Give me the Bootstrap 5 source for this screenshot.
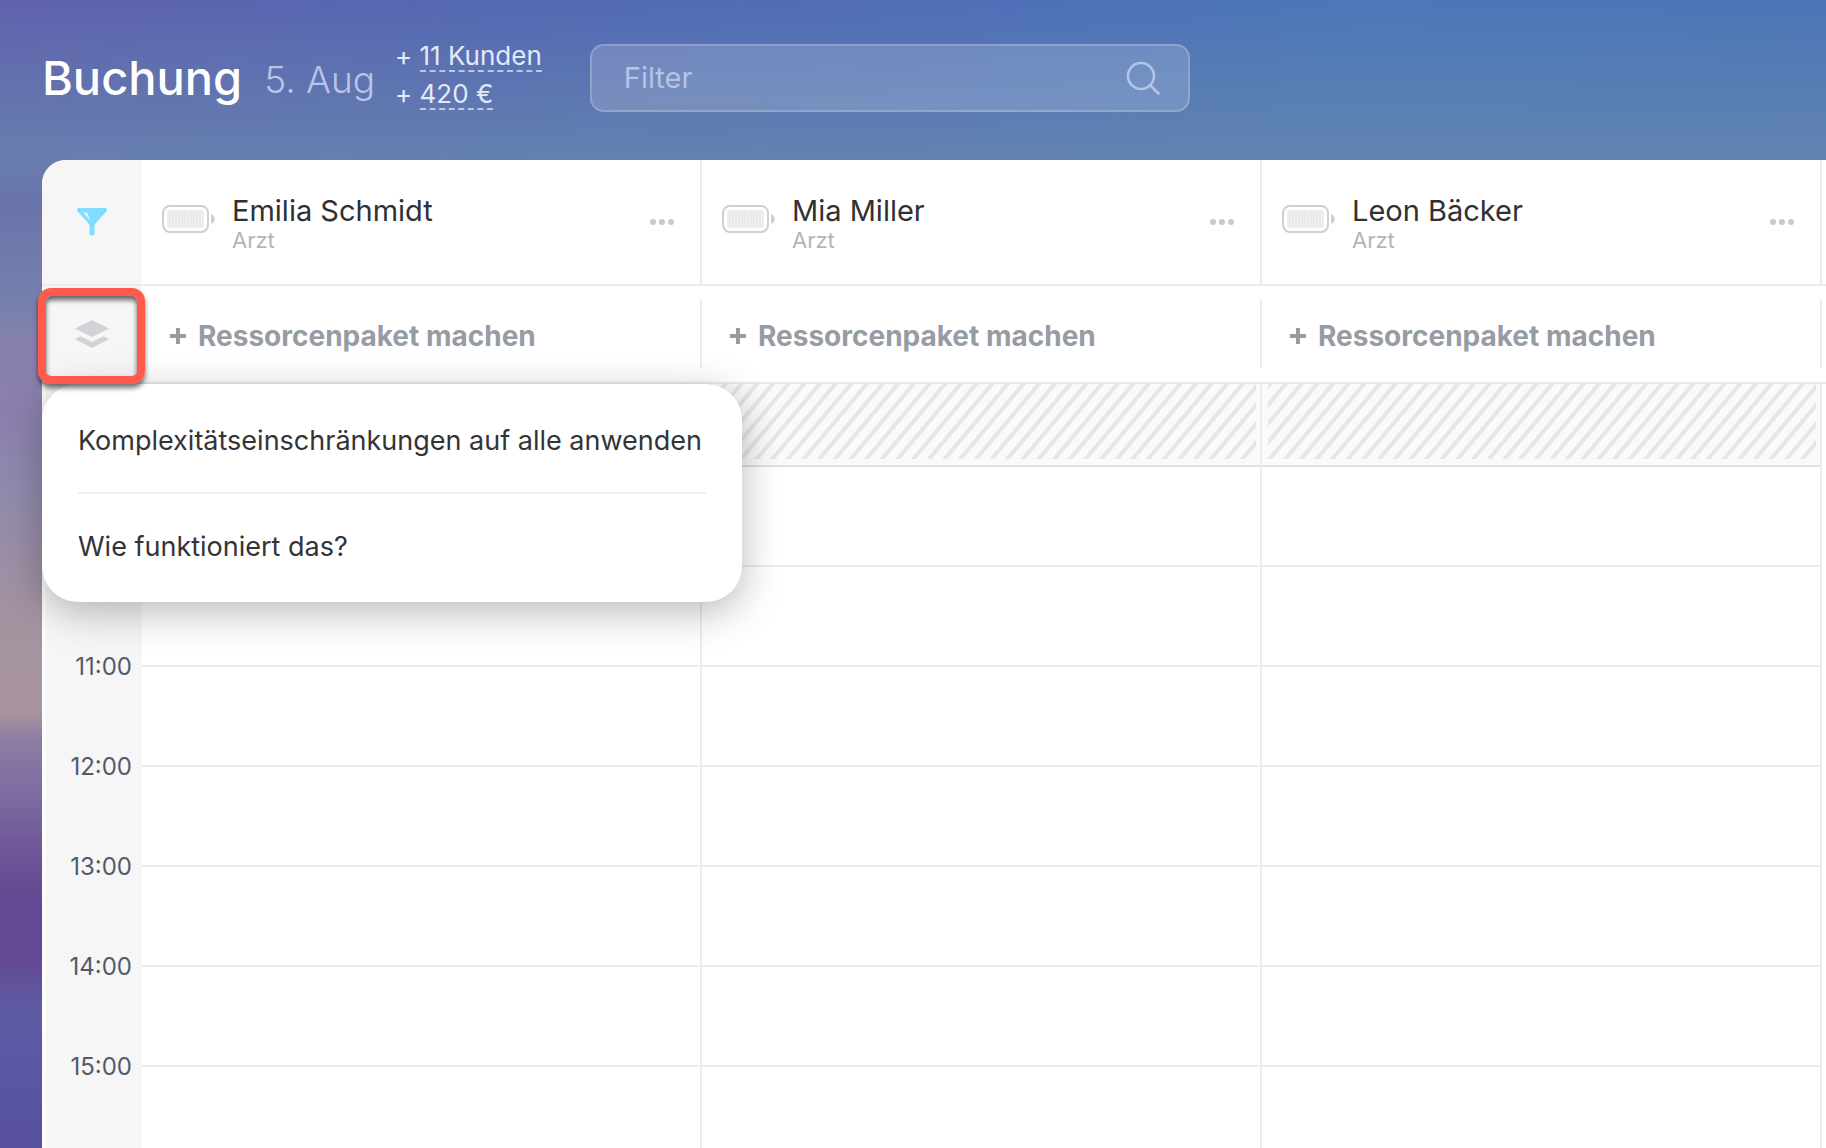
<!DOCTYPE html>
<html lang="de">
<head>
<meta charset="utf-8">
<meta name="viewport" content="width=device-width, initial-scale=1">
<title>Buchung</title>
<link rel="stylesheet" href="https://cdn.jsdelivr.net/npm/bootstrap@5.3.0/dist/css/bootstrap.min.css">
<style>
  body {
    font-family: Inter, "Liberation Sans", sans-serif;
    color: #2f3133;
    background: #5b58a5;
    min-height: 100vh;
    overflow: hidden;
  }
  .page {
    height: 100vh;
    background:
      linear-gradient(to bottom, transparent 150px, #6973aa 200px, #7580ad 300px, #8780ae 345px, #8c7fae 410px, #8f8aae 480px, #9d8fa6 560px, #a5949f 640px, #a9949f 712px, #8d7ca3 740px, #7b6aa0 800px, #6f5699 850px, #644893 900px, #644893 960px, #5f5aa3 1005px, #5a57a5 1070px, #57509c 1148px) 0 0 / 60px 100% no-repeat,
      linear-gradient(to bottom, transparent, rgba(108, 140, 174, .75) 180px) 0 0 / 100% 200px no-repeat,
      linear-gradient(97deg, #6062ad 0, #5468b3 25%, #4f6fb8 50%, #4b77b8 70%, #4b74b6 100%);
  }
  .topbar { height: 160px; padding: 0 42px 4px; }
  .topbar h1 { font-size: 47px; line-height: 60px; font-weight: 500; color: #fff; }
  .day { font-size: 37px; line-height: 60px; font-weight: 300; color: #b9c4ea; margin-left: 22px; padding-top: 4px; }
  .stats { font-size: 26px; line-height: 38px; color: #e3e9f8; margin-left: 20px; padding-bottom: 6px; }
  .stats a { color: inherit; text-decoration: none; display: inline-block; line-height: 28px; border-bottom: 2px dashed rgba(255, 255, 255, .6); }
  .search { width: 600px; height: 68px; border: 2px solid rgba(255, 255, 255, .2); border-radius: 14px; background: rgba(255, 255, 255, .16); padding: 0 28px 0 32px; }
  .search input, .search input:focus { background: none; color: #fff; font-size: 29px; line-height: 36px; box-shadow: none; }
  .search input::placeholder { color: #b3c4e6; opacity: 1; }
  .panel { margin-left: 42px; background: #fff; border-top-left-radius: 24px; min-height: 0; }
  .rail { width: 100px; background: #f6f6f6; }
  .staff-row, .package-row, .hours { padding-right: 4px; }
  .staff-row { height: 126px; border-bottom: 2px solid #ececec; }
  .staff-row .rail { border-top-left-radius: 24px; }
  .package-row { height: 98px; border-bottom: 2px solid #e9e9e9; }
  .lane { flex: 1 0 0; min-width: 460px; border-right: 2px solid #ececee; }
  .package-row .lane { margin: 14px 0; padding: 4px 0 0 28px; }
  .staff { padding: 0 26px 0 20px; }
  .staff h2 { font-size: 29px; line-height: 34px; font-weight: 400; }
  .staff-name { padding-top: 4px; }
  .batt { margin-bottom: 6px; }
  .role { font-size: 22px; line-height: 24px; color: #b1b4b9; padding-bottom: 2px; }
  .plain { border: 0; background: none; padding: 0; line-height: 0; }
  .add { font-size: 28px; line-height: 34px; font-weight: 700; color: #969ca3; gap: 12px; }
  .slot { height: 100px; border-bottom: 2px solid #ececee; }
  .closed { height: 83px; border-bottom-color: #dfe0e2; background: #fafafa; padding: 0 4px 6px 6px; }
  .hatch { background: repeating-linear-gradient(130deg, #e5e6e8 0 3px, #f9fafc 4px 11px, #e5e6e8 12px); }
  .hours .rail { padding-top: 268px; border-left: 4px solid #fcfcfd; }
  .time { height: 100px; font-size: 24px; line-height: 30px; color: #525b69; padding-right: 10px; }
  .marker { left: -4px; top: 2px; width: 107px; height: 96px; border: 8px solid #ff5a4b; border-radius: 13px; z-index: 5; box-shadow: 0 4px 5px rgba(0, 0, 0, .55), inset 0 4px 5px rgba(0, 0, 0, .6); }
  .popup { left: 0; top: 98px; width: 700px; height: 218px; border-radius: 36px; background: #fff; padding: 0 36px; z-index: 3; box-shadow: 0 10px 40px rgba(0, 0, 0, .28); }
  .popup a { color: #333436; text-decoration: none; font-size: 27px; line-height: 36px; padding: 39px 0 33px; }
  .popup a + a { border-top: 2px solid #f0f0f0; padding-top: 35px; }
</style>
</head>
<body>
<svg width="0" height="0" class="position-absolute"><defs>
  <g id="battery"><rect x="1" y="1" width="45" height="26" rx="7" fill="#fff" stroke="#cfd0d3" stroke-width="2"/><rect x="5" y="5" width="37" height="18" rx="2" fill="#f1f1f3"/><path d="M7 14h34" stroke="#e9eaec" stroke-width="18" stroke-dasharray="2 1"/><path d="M49 9c5 1 5 9 0 10z" fill="#cfd0d3"/></g>
  <g id="dots" fill="#c6c8cb"><circle cx="3" cy="3" r="3"/><circle cx="12" cy="3" r="3"/><circle cx="21" cy="3" r="3"/></g>
</defs></svg>
<div class="page d-flex flex-column">
  <header class="topbar flex-shrink-0 d-flex align-items-center">
    <h1 class="m-0">Buchung</h1>
    <div class="day">5. Aug</div>
    <div class="stats">
      <div>+ <a href="#">11 Kunden</a></div>
      <div>+ <a href="#">420 €</a></div>
    </div>
    <form class="search d-flex align-items-center ms-5">
      <input type="text" class="form-control border-0 p-0" placeholder="Filter" aria-label="Filter">
      <button type="button" class="plain" aria-label="Suchen"><svg width="34" height="34" viewBox="0 0 34 34" fill="none" stroke="#b3c4e6" stroke-width="2.6" stroke-linecap="round"><circle cx="15" cy="15" r="13"/><path d="M24.5 24.5l8 8"/></svg></button>
    </form>
  </header>
  <main class="panel flex-grow-1 d-flex flex-column">
    <div class="staff-row flex-shrink-0 d-flex">
      <div class="rail flex-shrink-0 d-flex align-items-center justify-content-center">
        <button class="plain" aria-label="Filtern"><svg width="30" height="28" viewBox="0 0 30 28"><path d="M2 0h26c2 0 2.600 1.800 1.500 3.200L19 15c-1 1.200-1.500 2-1.500 3.500v7c0 2.600-5 2.600-5 0v-7c0-1.500-.5-2.300-1.500-3.500L.5 3.200C-.6 1.800 0 0 2 0z" fill="#80ddff"/><path d="M6.500 4.500c2-.7 3.500.3 4.300 1.700l2.400 6.300z" fill="#fff" opacity=".85"/></svg></button>
      </div>
      <div class="lane staff d-flex align-items-center"><svg class="batt me-3" width="54" height="28"><use href="#battery"/></svg><div class="staff-name flex-grow-1"><h2 class="m-0">Emilia Schmidt</h2><div class="role">Arzt</div></div><button class="plain" aria-label="Mehr"><svg width="24" height="6"><use href="#dots"/></svg></button></div>
      <div class="lane staff d-flex align-items-center"><svg class="batt me-3" width="54" height="28"><use href="#battery"/></svg><div class="staff-name flex-grow-1"><h2 class="m-0">Mia Miller</h2><div class="role">Arzt</div></div><button class="plain" aria-label="Mehr"><svg width="24" height="6"><use href="#dots"/></svg></button></div>
      <div class="lane staff d-flex align-items-center"><svg class="batt me-3" width="54" height="28"><use href="#battery"/></svg><div class="staff-name flex-grow-1"><h2 class="m-0">Leon Bäcker</h2><div class="role">Arzt</div></div><button class="plain" aria-label="Mehr"><svg width="24" height="6"><use href="#dots"/></svg></button></div>
    </div>
    <div class="package-row flex-shrink-0 d-flex position-relative">
      <div class="rail flex-shrink-0 d-flex align-items-center justify-content-center">
        <button class="plain" aria-label="Ressourcenpakete"><svg width="34" height="28" viewBox="0 0 34 28" fill="#d0d2d5"><path d="M17 0l17 8.500L17 17 0 8.500z"/><path d="M0 19l5.500-2.800L17 22l11.500-5.800L34 19l-17 9z"/></svg></button>
      </div>
      <div class="lane d-flex align-items-center"><button class="plain add d-flex align-items-center"><svg width="16" height="16" stroke="#969ca3" stroke-width="4"><path d="M8 0v16M0 8h16"/></svg>Ressorcenpaket machen</button></div>
      <div class="lane d-flex align-items-center"><button class="plain add d-flex align-items-center"><svg width="16" height="16" stroke="#969ca3" stroke-width="4"><path d="M8 0v16M0 8h16"/></svg>Ressorcenpaket machen</button></div>
      <div class="lane d-flex align-items-center"><button class="plain add d-flex align-items-center"><svg width="16" height="16" stroke="#969ca3" stroke-width="4"><path d="M8 0v16M0 8h16"/></svg>Ressorcenpaket machen</button></div>
      <div class="marker position-absolute"></div>
      <nav class="popup position-absolute d-flex flex-column"><a href="#">Komplexitätseinschränkungen auf alle anwenden</a><a href="#">Wie funktioniert das?</a></nav>
    </div>
    <div class="hours d-flex flex-grow-1 overflow-hidden">
      <div class="rail flex-shrink-0 text-end">
        <div class="time">11:00</div>
        <div class="time">12:00</div>
        <div class="time">13:00</div>
        <div class="time">14:00</div>
        <div class="time">15:00</div>
      </div>
      <div class="lane">
        <div class="slot closed"><div class="hatch h-100"></div></div>
        <div class="slot"></div><div class="slot"></div><div class="slot"></div><div class="slot"></div><div class="slot"></div><div class="slot"></div><div class="slot"></div>
      </div>
      <div class="lane">
        <div class="slot closed"><div class="hatch h-100"></div></div>
        <div class="slot"></div><div class="slot"></div><div class="slot"></div><div class="slot"></div><div class="slot"></div><div class="slot"></div><div class="slot"></div>
      </div>
      <div class="lane">
        <div class="slot closed"><div class="hatch h-100"></div></div>
        <div class="slot"></div><div class="slot"></div><div class="slot"></div><div class="slot"></div><div class="slot"></div><div class="slot"></div><div class="slot"></div>
      </div>
    </div>
  </main>
</div>
<script src="https://cdn.jsdelivr.net/npm/bootstrap@5.3.0/dist/js/bootstrap.bundle.min.js"></script>
</body>
</html>
